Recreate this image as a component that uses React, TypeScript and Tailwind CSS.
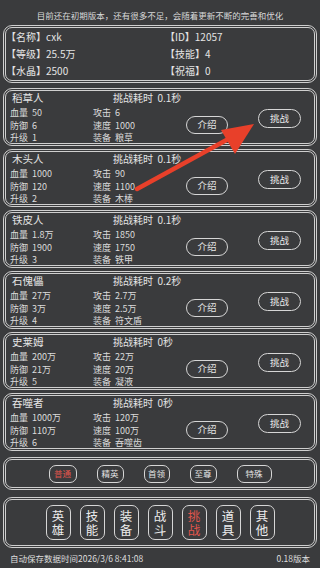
import React from "react";

type Monster = {
  name: string;
  time: string;
  hp: string;
  atk: string;
  def: string;
  spd: string;
  lv: string;
  equip: string;
};

const monsters: Monster[] = [
  { name: "稻草人", time: "0.1秒", hp: "50", atk: "6", def: "6", spd: "1000", lv: "1", equip: "粮草" },
  { name: "木头人", time: "0.1秒", hp: "1000", atk: "90", def: "120", spd: "1100", lv: "2", equip: "木棒" },
  { name: "铁皮人", time: "0.1秒", hp: "1.8万", atk: "1850", def: "1900", spd: "1750", lv: "3", equip: "铁甲" },
  { name: "石傀儡", time: "0.2秒", hp: "27万", atk: "2.7万", def: "3万", spd: "2.5万", lv: "4", equip: "符文盾" },
  { name: "史莱姆", time: "0秒", hp: "200万", atk: "22万", def: "21万", spd: "20万", lv: "5", equip: "凝液" },
  { name: "吞噬者", time: "0秒", hp: "1000万", atk: "120万", def: "110万", spd: "100万", lv: "6", equip: "吞噬齿" },
];

const tiers = [
  { label: "普通", w: "w-[28px]", active: true },
  { label: "精英", w: "w-[27px]", active: false },
  { label: "首领", w: "w-[26px]", active: false },
  { label: "至尊", w: "w-[27px]", active: false },
  { label: "特殊", w: "w-[35px]", active: false },
];

const tabs = [
  ["英", "雄"],
  ["技", "能"],
  ["装", "备"],
  ["战", "斗"],
  ["挑", "战"],
  ["道", "具"],
  ["其", "他"],
];

const box = "rounded-[9px] border-[3px] border-double border-[#cfcfcf]";

function Stat({ label, value }: { label: string; value: string }) {
  return (
    <div className="flex w-[83px] h-[12.5px] items-center">
      <span className="w-[22px]">{label}</span>
      <span>{value}</span>
    </div>
  );
}

function MonsterCard({ m }: { m: Monster }) {
  return (
    <div className={`${box} h-[58px] flex pl-[4px] pt-[2px] overflow-hidden`}>
      <div className="w-[176px] shrink-0 flex flex-col">
        <div className="flex h-[16px] items-center leading-none">
          <span className="w-[101px] ml-[2px] text-[10.5px]">{m.name}</span>
          <span className="text-[10px]">挑战耗时&nbsp;&nbsp;{m.time}</span>
        </div>
        <div className="text-[9px] leading-none mt-[3px] text-[#dcdcdc]">
          <div className="flex">
            <Stat label="血量" value={m.hp} />
            <Stat label="攻击" value={m.atk} />
          </div>
          <div className="flex">
            <Stat label="防御" value={m.def} />
            <Stat label="速度" value={m.spd} />
          </div>
          <div className="flex">
            <Stat label="升级" value={m.lv} />
            <Stat label="装备" value={m.equip} />
          </div>
        </div>
      </div>
      <button className="shrink-0 w-[42px] h-[18px] mt-[23px] rounded-full border-[1.5px] border-[#d6d6d6] text-[9.5px] leading-none text-[#e6e6e6]">
        介绍
      </button>
      <button className="shrink-0 ml-[30px] w-[43px] h-[19px] mt-[16px] rounded-full border-[1.5px] border-[#d6d6d6] text-[9.5px] leading-none text-[#e6e6e6]">
        挑战
      </button>
    </div>
  );
}

export default function App() {
  return (
    <div
      className="relative w-[320px] h-[568px] overflow-hidden bg-[#3a3b3d] text-[#e4e4e4] flex flex-col px-[3px] whitespace-nowrap"
      style={{ fontFamily: '"Noto Sans CJK SC", "Noto Sans", sans-serif' }}
    >
      <div className="h-[25px] pt-[8px] text-center text-[8.5px] leading-[14px] text-[#d8d8d8]">
        目前还在初期版本，还有很多不足，会随着更新不断的完善和优化
      </div>

      <div className={`${box} h-[58px] flex flex-col justify-center text-[10px] leading-none`}>
        {[
          ["【名称】", "cxk", "【ID】", "12057"],
          ["【等级】", "25.5万", "【技能】", "4"],
          ["【水晶】", "2500", "【祝福】", "0"],
        ].map((r) => (
          <div key={r[0]} className="flex h-[19px] items-center">
            <span className="w-[159px]">
              {r[0]}
              {r[1]}
            </span>
            <span>
              {r[2]}
              {r[3]}
            </span>
          </div>
        ))}
      </div>

      <div className="mt-[5px] flex flex-col gap-[3px]">
        {monsters.map((m) => (
          <MonsterCard key={m.name} m={m} />
        ))}
      </div>

      <div className={`${box} mt-[6px] h-[33px] flex items-center justify-center gap-[20px]`}>
        {tiers.map((t) => (
          <button
            key={t.label}
            className={`${t.w} h-[18px] rounded-[7px] border-[1.5px] border-[#d6d6d6] text-[8.5px] leading-none ${
              t.active ? "text-[#e0554c]" : "text-[#e4e4e4]"
            }`}
          >
            {t.label}
          </button>
        ))}
      </div>

      <div className={`${box} mt-[7px] h-[51px] flex items-center justify-center gap-[9px]`}>
        {tabs.map((t) => (
          <button
            key={t[0]}
            className={`w-[25px] h-[35px] rounded-[7px] border-[1.5px] border-[#d6d6d6] flex flex-col items-center justify-center gap-[1px] text-[12.5px] leading-[13px] ${
              t[0] === "挑" ? "text-[#e0554c]" : "text-[#ececec]"
            }`}
          >
            <span>{t[0]}</span>
            <span>{t[1]}</span>
          </button>
        ))}
      </div>

      <div className="flex-1 flex items-center justify-between px-[7px] text-[8.5px] leading-none text-[#dedede]">
        <span>自动保存数据时间2026/3/6 8:41:08</span>
        <span>0.18版本</span>
      </div>

      <svg
        className="absolute inset-0 pointer-events-none"
        width="320"
        height="568"
        viewBox="0 0 320 568"
      >
        <line x1="137" y1="189" x2="232" y2="137" stroke="#e8402a" strokeWidth="4.5" strokeLinecap="round" />
        <polygon points="254,124 221,130 235,154" fill="#e8402a" />
      </svg>
    </div>
  );
}
